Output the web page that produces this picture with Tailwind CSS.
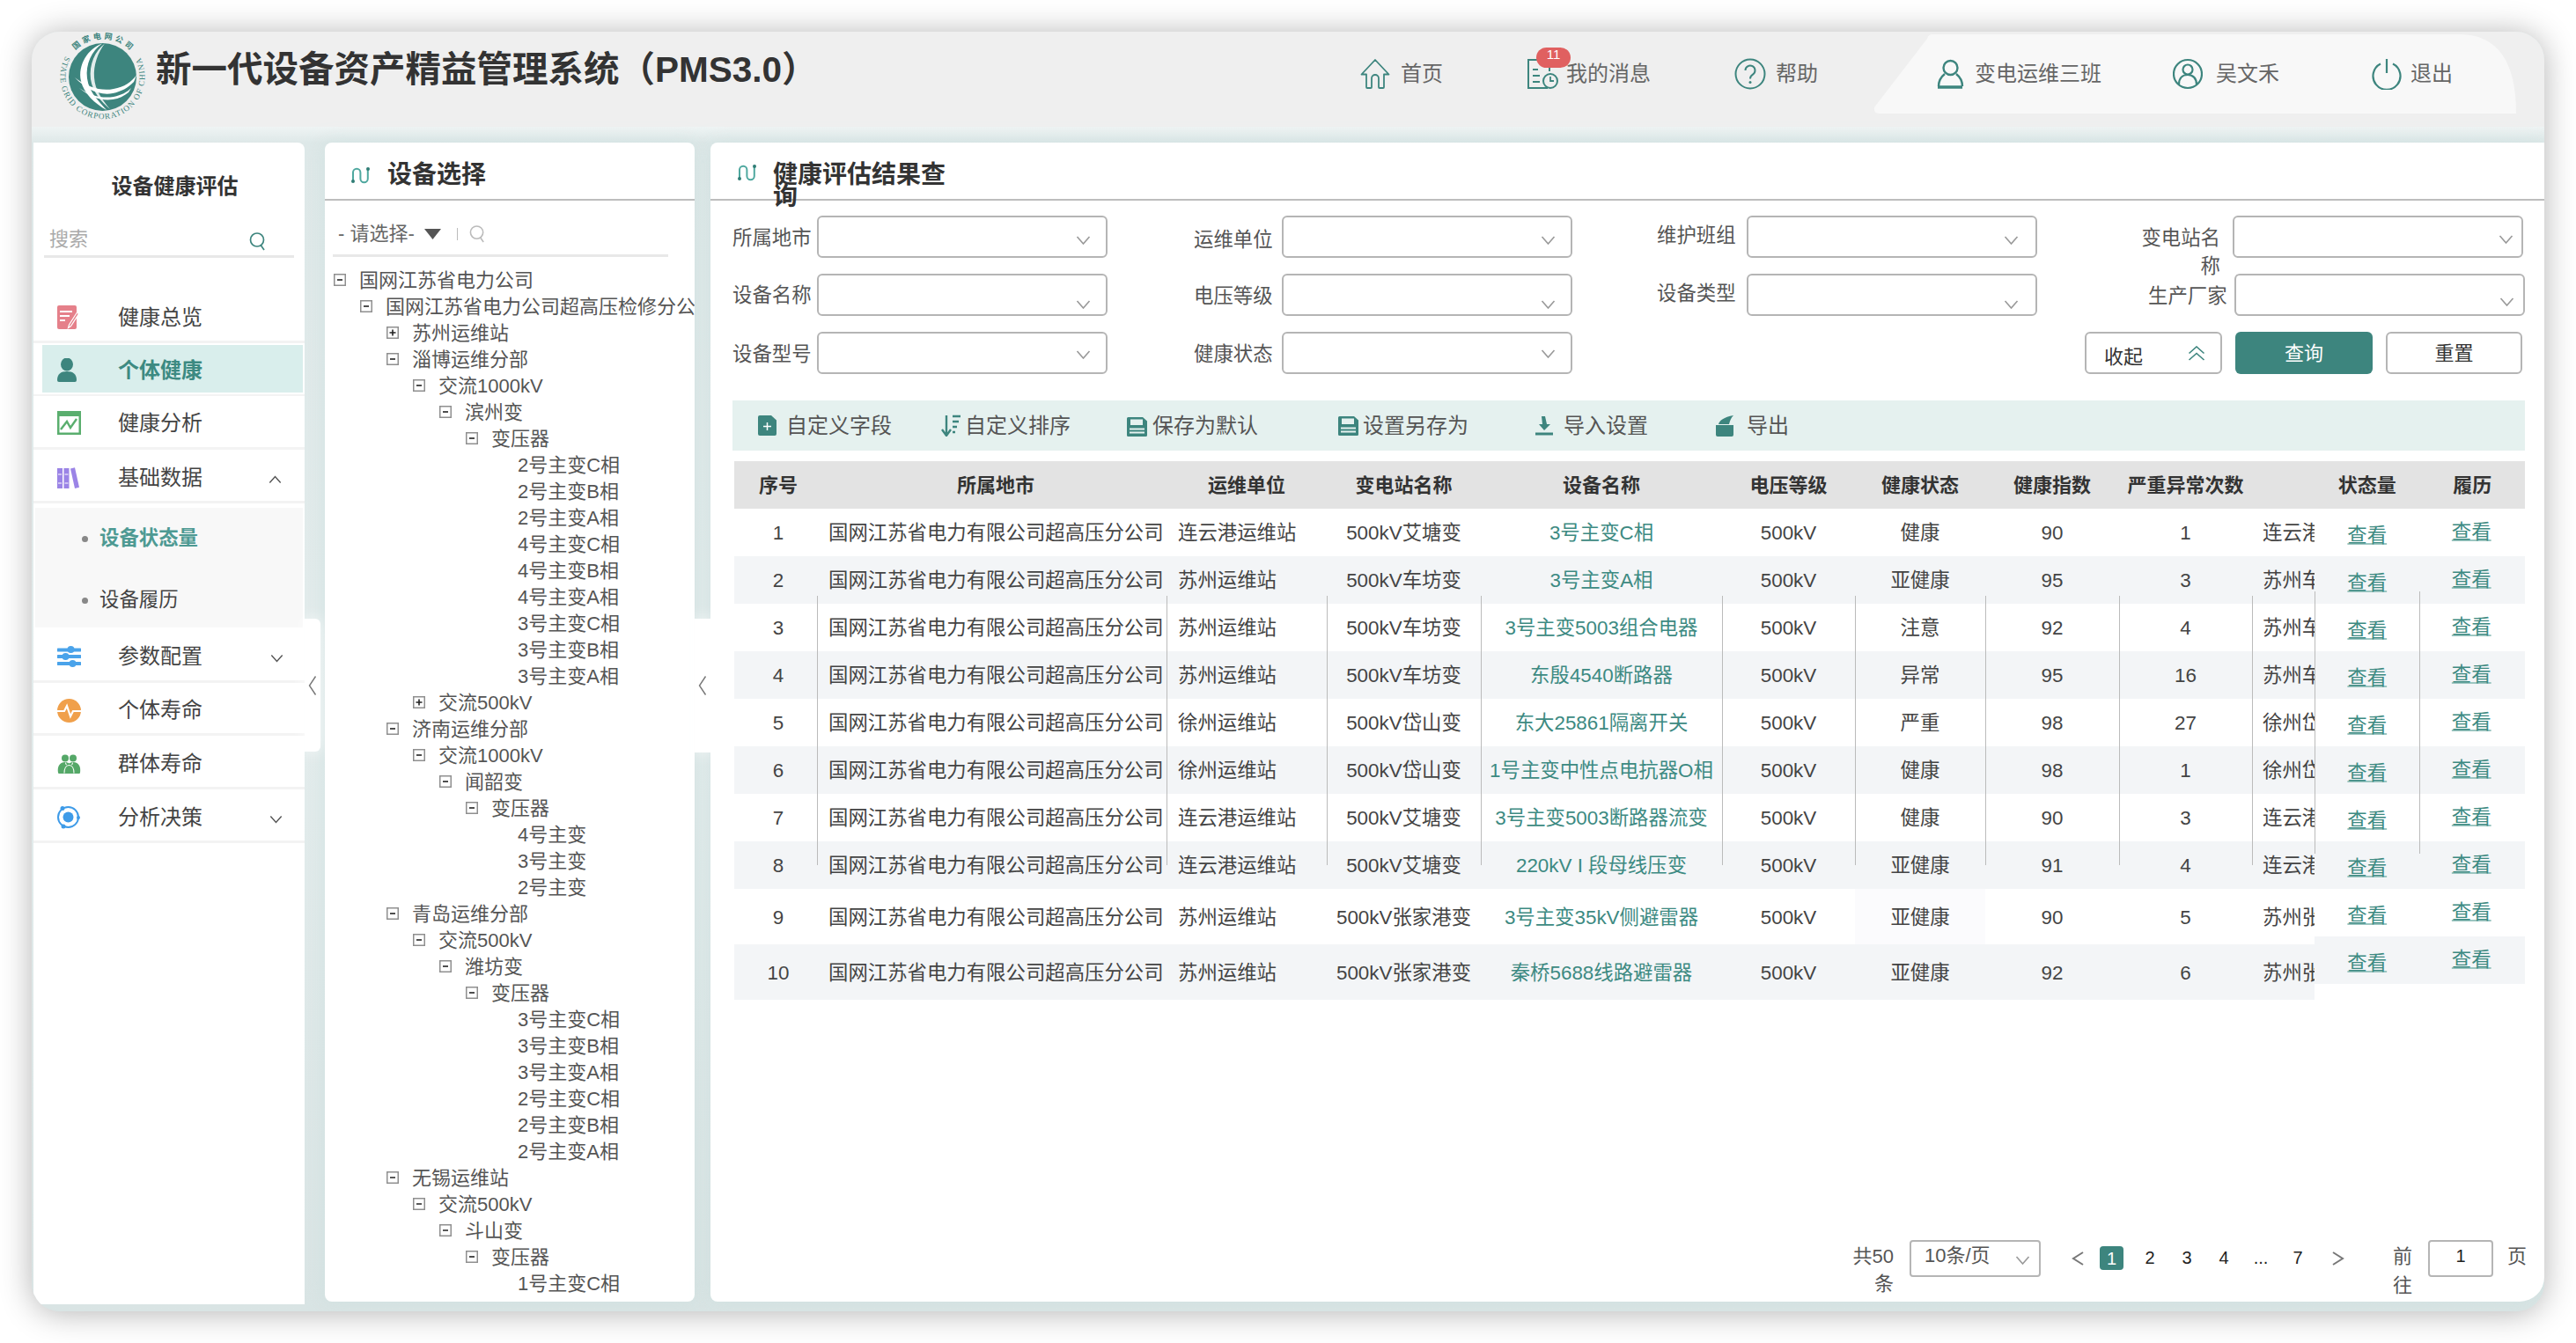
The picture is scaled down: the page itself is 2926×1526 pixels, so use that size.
<!DOCTYPE html>
<html lang="zh-CN">
<head>
<meta charset="utf-8">
<title>PMS3.0</title>
<script src="https://cdn.jsdelivr.net/npm/@tailwindcss/browser@4"></script>
</head>
<body class="w-[2926px] h-[1526px] overflow-hidden bg-white p-[36px] [font-family:'Liberation_Sans','Noto_Sans_CJK_SC',sans-serif] text-[#555]">
<svg class="absolute w-0 h-0" aria-hidden="true">
  <symbol id="chev" viewBox="0 0 17 10"><path d="M1.5 1 8.5 9 15.5 1" fill="none" stroke="#999" stroke-width="1.6"/></symbol>
  <symbol id="minus" viewBox="0 0 14 14"><rect x=".75" y=".75" width="12.5" height="12.5" fill="#fff" stroke="#8f8f8f" stroke-width="1.5"/><path d="M4 7h6" stroke="#222" stroke-width="1.6"/></symbol>
  <symbol id="plus" viewBox="0 0 14 14"><rect x=".75" y=".75" width="12.5" height="12.5" fill="#fff" stroke="#8f8f8f" stroke-width="1.5"/><path d="M3.5 7h7M7 3.5v7" stroke="#222" stroke-width="1.6"/></symbol>
  <symbol id="wave" viewBox="0 0 24 20"><path d="M3 16V7a4.2 4.2 0 0 1 8.400 0v7a4.200 4.200 0 0 0 8.400 0V4" fill="none" stroke="#4fa89f" stroke-width="2"/><circle cx="3" cy="17" r="2" fill="#2f7d75"/><circle cx="20" cy="3" r="2" fill="#2f7d75"/></symbol>
  <symbol id="search" viewBox="0 0 20 22"><circle cx="9" cy="9.500" r="7.500" fill="none" stroke="currentColor" stroke-width="1.700"/><path d="m13.500 16 3.500 5" stroke="currentColor" stroke-width="1.700"/></symbol>
  <symbol id="floppy" viewBox="0 0 25 24"><path d="M1 2.500A1.500 1.500 0 0 1 2.500 1H19l5 4.500V21.500a1.500 1.500 0 0 1-1.500 1.500H2.500A1.500 1.500 0 0 1 1 21.500Z" fill="#3d857e"/><rect x="5" y="3.500" width="14" height="6.500" fill="#e5f1ef"/><path d="M4 14.500h17M4 18.500h17" stroke="#e5f1ef" stroke-width="2"/></symbol>
</svg>

<div class="w-[2854px] h-[1454px] rounded-[32px] overflow-hidden flex flex-col bg-[#dbe6e6] shadow-[0_2px_36px_rgba(0,0,0,0.3)]">

  <!-- 顶栏 -->
  <header class="h-[108px] shrink-0 bg-[#efefef] flex items-start">
    <svg class="w-[112px] h-[108px] ml-[24px] shrink-0" viewBox="60 36 112 108">
      <defs>
        <path id="ringTop" d="M85.500 57A44 44 0 0 1 147.500 57"/>
        <path id="ringBottom" d="M74.500 64A48 48 0 1 0 158.500 64"/>
      </defs>
      <circle cx="116.500" cy="87.500" r="38.500" fill="#3d857e"/>
      <path d="M116 49.500C100 55 88 74 92 92c3 14 16 26 29 33-8-9-20-20-22-36C97 73 104 58 116 49.500Z" fill="#fff"/>
      <path d="M119 49.500C108 58 101 73 103 90c2 14 12 26 22 34-9-11-17-21-18-36-1-14 4-28 12-38.500Z" fill="#fff" opacity=".85"/>
      <path d="M85 88c14 11 30 16 44 13 12-2 21-8 26-16-1 3-2 6-3 8-7 7-14 11-24 13-15 3-31-5-43-18Z" fill="#fff"/>
      <path d="M90 100c13 9 26 12 39 10 9-2 15-5 20-10l-3 5c-5 4-11 7-18 8-13 2-26-3-38-13Z" fill="#fff"/>
      <text font-size="9" fill="#3d857e" font-weight="700" font-family="'Noto Sans CJK SC',sans-serif"><textPath href="#ringTop" textLength="69" lengthAdjust="spacing">国家电网公司</textPath></text>
      <text font-size="9.200" fill="#3d857e" font-family="'Liberation Serif',serif"><textPath href="#ringBottom" textLength="197" lengthAdjust="spacing">STATE GRID CORPORATION OF CHINA</textPath></text>
    </svg>
    <h1 class="ml-[5px] mt-[20px] text-[40.5px] leading-[46px] font-bold text-[#333] whitespace-nowrap">新一代设备资产精益管理系统（PMS3.0）</h1>

    <nav class="ml-auto mr-[32px] mt-[3px] h-[90px] w-[1314px] flex items-center shrink-0 text-[24px] text-[#666]">
      <div class="w-[190px] flex items-center gap-[11px]">
        <svg class="w-[36px] h-[36px]" viewBox="0 0 36 36"><path d="M18 2 2.500 18.500H8V33a1 1 0 0 0 1 1h4a1 1 0 0 0 1-1V23a4 4 0 0 1 8 0v10a1 1 0 0 0 1 1h4a1 1 0 0 0 1-1V18.500h5.500Z" fill="none" stroke="#3d857e" stroke-width="1.800" stroke-linejoin="round"/></svg>
        <span>首页</span>
      </div>
      <div class="w-[236px] flex items-center gap-[9px]">
        <div class="relative w-[36px] h-[36px]">
          <svg class="w-[36px] h-[36px]" viewBox="0 0 36 36"><path d="M24 34H2V2h24v13" fill="none" stroke="#3d857e" stroke-width="2"/><path d="M7 13h6M7 20h8M7 27h8" stroke="#3d857e" stroke-width="2"/><circle cx="27" cy="26" r="8" fill="#efefef" stroke="#3d857e" stroke-width="2"/><path d="M27 21v5h4" fill="none" stroke="#3d857e" stroke-width="1.800"/></svg>
          <span class="absolute left-[11px] top-[-12px] w-[39px] h-[23px] rounded-[20px] bg-[#e06060] text-white text-[15px] leading-[15px] text-center">11</span>
        </div>
        <span>我的消息</span>
      </div>
      <div class="w-[158px] flex items-center gap-[11px]">
        <svg class="w-[36px] h-[36px]" viewBox="0 0 36 36"><circle cx="18" cy="18" r="16.500" fill="none" stroke="#3d857e" stroke-width="2"/><path d="M12.500 14a5.500 5.500 0 1 1 8.500 4.600c-2 1.300-3 2.400-3 4.900" fill="none" stroke="#3d857e" stroke-width="2"/><circle cx="18" cy="27.500" r="1.500" fill="#3d857e"/></svg>
        <span>帮助</span>
      </div>
      <div class="relative w-[730px] h-[90px] flex items-center pl-[72px]">
        <svg class="absolute inset-0 w-[730px] h-[90px]" viewBox="0 0 730 90"><path d="M61 5Q62 0 68 0H665Q730 0 730 90H6Q0 90 1 83Z" fill="#f8f8f8"/></svg>
        <div class="relative w-[268px] flex items-center gap-[12px]">
          <svg class="w-[31px] h-[34px]" viewBox="0 0 31 34"><circle cx="15.500" cy="10" r="8" fill="none" stroke="#3d857e" stroke-width="2.400"/><path d="M9 17C4 21 2 25 2 31M22 17c5 4 7 8 7 14" fill="none" stroke="#3d857e" stroke-width="2.400"/><path d="M1 32h28" stroke="#3d857e" stroke-width="3.400"/></svg>
          <span>变电运维三班</span>
        </div>
        <div class="relative w-[226px] flex items-center gap-[15px]">
          <svg class="w-[34px] h-[36px]" viewBox="0 0 34 36"><circle cx="17" cy="18" r="16" fill="none" stroke="#3d857e" stroke-width="2.200"/><circle cx="17" cy="13" r="5.500" fill="none" stroke="#3d857e" stroke-width="2.200"/><path d="M7 30c0-7 4-11 10-11s10 4 10 11" fill="none" stroke="#3d857e" stroke-width="2.200"/></svg>
          <span>吴文禾</span>
        </div>
        <div class="relative flex items-center gap-[10px]">
          <svg class="w-[34px] h-[36px]" viewBox="0 0 34 36"><path d="M10 6.500a15.500 15.500 0 1 0 14 0" fill="none" stroke="#3d857e" stroke-width="2.200"/><path d="M17 1v16" stroke="#3d857e" stroke-width="2.200"/></svg>
          <span>退出</span>
        </div>
      </div>
    </nav>
  </header>

  <!-- 主体 -->
  <div class="relative flex-1 flex items-start pt-[18px] bg-[linear-gradient(#eff4f4,#dee8e8_18px,#e3ecec_700px,#d9e4e4)]">
    <!-- 折叠把手 -->
    <div class="absolute left-[310px] top-[559px] w-[18px] h-[151px] bg-white rounded-r-[6px] flex items-center justify-center shadow-[0_0_18px_rgba(255,255,255,0.8)]">
      <svg class="w-[10px] h-[24px]" viewBox="0 0 10 24"><path d="M8.500 1.500 1.500 12l7 10.500" fill="none" stroke="#777" stroke-width="1.400"/></svg>
    </div>
    <div class="absolute left-[753px] top-[559px] w-[18px] h-[152px] bg-white flex items-center justify-center shadow-[0_0_18px_rgba(255,255,255,0.8)]">
      <svg class="w-[10px] h-[24px]" viewBox="0 0 10 24"><path d="M8.500 1.500 1.500 12l7 10.500" fill="none" stroke="#777" stroke-width="1.400"/></svg>
    </div>

    <!-- 左侧菜单 -->
    <aside class="ml-[2px] w-[308px] h-[1320px] bg-white rounded-tr-[8px] shrink-0 text-[24px] text-[#444]">
      <div class="h-[100px] pl-[13px] flex items-center justify-center font-bold text-[#333]">设备健康评估</div>
      <div class="mx-[12px] h-[31px] flex justify-between border-b-[3px] border-[#e8e8e8]">
        <span class="pl-[6px] text-[22px] leading-[20px] text-[#aaa]">搜索</span>
        <svg class="w-[20px] h-[22px] mr-[31px] mt-[1px] text-[#3d857e]"><use href="#search"/></svg>
      </div>
      <div class="mt-[37px]">
        <div class="h-[60px] pt-[4px] flex items-center pl-[27px] border-b-[3px] border-[#f3f3f3]">
          <svg class="w-[24px] h-[27px] mr-[45px]" viewBox="0 0 24 27"><path d="M0 2a2 2 0 0 1 2-2h18a2 2 0 0 1 2 2v23a2 2 0 0 1-2 2H2a2 2 0 0 1-2-2Z" fill="#e5808a"/><path d="M3 7h14M3 12h11M3 17h6" stroke="#fff" stroke-width="1.800"/><path d="m22.500 8-9 14-1 3.500 3-2 9-14Z" fill="#e5808a" stroke="#fff" stroke-width="1.200"/></svg>
          <span>健康总览</span>
        </div>
        <div class="h-[60px] pt-[2px] pb-[2px] border-b-[2px] border-[#f3f3f3] pl-[10px] pr-[2px]">
          <div class="h-full pt-[3px] bg-[#d9eeec] flex items-center pl-[17px] text-[#3d8a82] font-bold">
            <svg class="w-[22px] h-[27px] mr-[47px]" viewBox="0 0 22 27"><ellipse cx="11" cy="7" rx="7" ry="7.500" fill="#3d857e"/><path d="M0 25c0-7 4-10 11-10s11 3 11 10a2 2 0 0 1-2 2H2a2 2 0 0 1-2-2Z" fill="#3d857e"/></svg>
            <span>个体健康</span>
          </div>
        </div>
        <div class="h-[61px] pt-[3px] flex items-center pl-[27px] border-b-[3px] border-[#f3f3f3]">
          <svg class="w-[27px] h-[27px] mr-[42px]" viewBox="0 0 27 27"><rect width="27" height="27" fill="#5aae6e"/><rect x="2.500" y="6" width="22" height="18.500" fill="#fff"/><path d="m4 21 7-9 4 7 7-10" fill="none" stroke="#5aae6e" stroke-width="2.400"/></svg>
          <span>健康分析</span>
        </div>
        <div class="h-[61px] pt-[6px] flex items-center pl-[27px] border-b-[3px] border-[#f3f3f3]">
          <svg class="w-[25px] h-[24px] mr-[44px]" viewBox="0 0 25 24"><path d="M0 1h6v23H0ZM7.500 1h6v23h-6Z" fill="#9b84e6"/><path d="m15 1.500 5-1.200 5 22.500-5 1.200Z" fill="#9b84e6"/><path d="M1 8h4M8.500 8h4M1 18h4M8.500 18h4" stroke="#fff" stroke-width="1.200"/></svg>
          <span>基础数据</span>
          <svg class="w-[15px] h-[10px] ml-auto mr-[26px] mt-[4px] rotate-180 text-[#444]" viewBox="0 0 17 10"><path d="M1.500 1 8.500 9 15.500 1" fill="none" stroke="#555" stroke-width="1.600"/></svg>
        </div>
        <div class="mt-[5px] ml-[2px] w-[304px] bg-[#f8f8f8] text-[22.400px]">
          <div class="h-[68px] pt-[2px] flex items-center pl-[53px] gap-[13px] text-[#4e9a93] font-bold"><i class="w-[7px] h-[7px] rounded-full bg-[#888]"></i><span>设备状态量</span></div>
          <div class="h-[68px] pt-[6px] flex items-center pl-[53px] gap-[13px]"><i class="w-[7px] h-[7px] rounded-full bg-[#888]"></i><span>设备履历</span></div>
        </div>
        <div class="h-[63px] pt-[5px] flex items-center pl-[27px] border-b-[3px] border-[#f3f3f3]">
          <svg class="w-[27px] h-[26px] mr-[42px]" viewBox="0 0 27 26"><path d="M1 5.500h11M19 5.500h7M1 13h5M13 13h13M1 21h13M21 21h5" stroke="#4aa3ea" stroke-width="4" stroke-linecap="round"/><circle cx="15.500" cy="5" r="4" fill="#4aa3ea"/><circle cx="9.500" cy="13" r="4" fill="#4aa3ea"/><circle cx="17.500" cy="21" r="4" fill="#4aa3ea"/></svg>
          <span>参数配置</span>
          <svg class="w-[15px] h-[10px] ml-auto mr-[24px] mt-[4px]" viewBox="0 0 17 10"><path d="M1.500 1 8.500 9 15.500 1" fill="none" stroke="#555" stroke-width="1.600"/></svg>
        </div>
        <div class="h-[60px] pt-[5px] flex items-center pl-[27px] border-b-[3px] border-[#f3f3f3]">
          <svg class="w-[27px] h-[27px] mr-[42px]" viewBox="0 0 27 27"><circle cx="13.500" cy="13.500" r="13.500" fill="#f0a04b"/><path d="M0 14h8l3-6 4 12 3-6h9" fill="none" stroke="#fff" stroke-width="2.200"/></svg>
          <span>个体寿命</span>
        </div>
        <div class="h-[61px] pt-[5px] flex items-center pl-[27px] border-b-[3px] border-[#f3f3f3]">
          <svg class="w-[27px] h-[22px] mr-[42px]" viewBox="0 0 27 22"><circle cx="9" cy="4.500" r="4" fill="#55a868"/><circle cx="18" cy="4.500" r="4" fill="#55a868"/><path d="M1 21c-1-6 1-12 8-12 2 0 3 .5 4.500 1.500C15 9.500 16 9 18 9c7 0 9 6 8 12-.2 1-1 1-2 1H3c-1 0-1.800 0-2-1Z" fill="#55a868"/><path d="M8 21.500c0-5 2-9 5.500-9s5.500 4 5.500 9M9.500 9.500c0 1 .5 2 1 2.500M17.500 9.500c0 1-.5 2-1 2.500" fill="none" stroke="#fff" stroke-width="1.100"/></svg>
          <span>群体寿命</span>
        </div>
        <div class="h-[61px] pt-[5px] flex items-center pl-[26px] border-b-[3px] border-[#f3f3f3]">
          <svg class="w-[27px] h-[27px] mr-[43px]" viewBox="0 0 27 27"><circle cx="13.500" cy="13.500" r="11.500" fill="none" stroke="#3e9be8" stroke-width="2"/><circle cx="13.500" cy="13.500" r="6" fill="#3e9be8"/><circle cx="7" cy="3.500" r="2.500" fill="#3e9be8"/><circle cx="25" cy="14" r="2" fill="#3e9be8"/><circle cx="8" cy="24" r="2.500" fill="#3e9be8"/></svg>
          <span>分析决策</span>
          <svg class="w-[15px] h-[10px] ml-auto mr-[25px] mt-[4px]" viewBox="0 0 17 10"><path d="M1.500 1 8.500 9 15.500 1" fill="none" stroke="#555" stroke-width="1.600"/></svg>
        </div>
      </div>
    </aside>

    <!-- 设备选择 -->
    <section class="ml-[23px] w-[420px] h-[1317px] bg-white rounded-t-[8px] rounded-b-[8px] overflow-hidden shrink-0 shadow-[0_0_20px_rgba(200,222,220,0.6)]">
      <div class="h-[66px] pt-[10px] flex items-center border-b-[2px] border-[#bdbdbd]">
        <svg class="w-[24px] h-[20px] ml-[29px] mr-[18px]"><use href="#wave"/></svg>
        <h2 class="text-[28px] font-bold text-[#333]">设备选择</h2>
      </div>
      <div class="ml-[9px] w-[381px] h-[64px] pt-[14px] flex items-center border-b-[3px] border-[#e8e8e8] text-[22px] text-[#666]">
        <span class="pl-[6px] whitespace-nowrap">- 请选择-</span>
        <svg class="w-[19px] h-[12px] ml-[11px] mr-[18px]" viewBox="0 0 19 12"><path d="M0 0h19L9.500 12Z" fill="#555"/></svg>
        <i class="w-px h-[14px] bg-[#bbb] mr-[13px]"></i>
        <svg class="w-[19px] h-[21px] text-[#bbb]"><use href="#search"/></svg>
      </div>
      <div class="mt-[11px] pl-[10px] text-[22px] text-[#555] whitespace-nowrap [&>div]:h-[30px] [&>div]:flex [&>div]:items-center [&_svg]:w-[14px] [&_svg]:h-[14px] [&_svg]:mr-[15px] [&_svg]:shrink-0">
        <div><svg><use href="#minus"/></svg>国网江苏省电力公司</div>
        <div class="pl-[30px]"><svg><use href="#minus"/></svg>国网江苏省电力公司超高压检修分公司</div>
        <div class="pl-[60px]"><svg><use href="#plus"/></svg>苏州运维站</div>
        <div class="pl-[60px]"><svg><use href="#minus"/></svg>淄博运维分部</div>
        <div class="pl-[90px]"><svg><use href="#minus"/></svg>交流1000kV</div>
        <div class="pl-[120px]"><svg><use href="#minus"/></svg>滨州变</div>
        <div class="pl-[150px]"><svg><use href="#minus"/></svg>变压器</div>
        <div class="pl-[209px]">2号主变C相</div>
        <div class="pl-[209px]">2号主变B相</div>
        <div class="pl-[209px]">2号主变A相</div>
        <div class="pl-[209px]">4号主变C相</div>
        <div class="pl-[209px]">4号主变B相</div>
        <div class="pl-[209px]">4号主变A相</div>
        <div class="pl-[209px]">3号主变C相</div>
        <div class="pl-[209px]">3号主变B相</div>
        <div class="pl-[209px]">3号主变A相</div>
        <div class="pl-[90px]"><svg><use href="#plus"/></svg>交流500kV</div>
        <div class="pl-[60px]"><svg><use href="#minus"/></svg>济南运维分部</div>
        <div class="pl-[90px]"><svg><use href="#minus"/></svg>交流1000kV</div>
        <div class="pl-[120px]"><svg><use href="#minus"/></svg>闻韶变</div>
        <div class="pl-[150px]"><svg><use href="#minus"/></svg>变压器</div>
        <div class="pl-[209px]">4号主变</div>
        <div class="pl-[209px]">3号主变</div>
        <div class="pl-[209px]">2号主变</div>
        <div class="pl-[60px]"><svg><use href="#minus"/></svg>青岛运维分部</div>
        <div class="pl-[90px]"><svg><use href="#minus"/></svg>交流500kV</div>
        <div class="pl-[120px]"><svg><use href="#minus"/></svg>潍坊变</div>
        <div class="pl-[150px]"><svg><use href="#minus"/></svg>变压器</div>
        <div class="pl-[209px]">3号主变C相</div>
        <div class="pl-[209px]">3号主变B相</div>
        <div class="pl-[209px]">3号主变A相</div>
        <div class="pl-[209px]">2号主变C相</div>
        <div class="pl-[209px]">2号主变B相</div>
        <div class="pl-[209px]">2号主变A相</div>
        <div class="pl-[60px]"><svg><use href="#minus"/></svg>无锡运维站</div>
        <div class="pl-[90px]"><svg><use href="#minus"/></svg>交流500kV</div>
        <div class="pl-[120px]"><svg><use href="#minus"/></svg>斗山变</div>
        <div class="pl-[150px]"><svg><use href="#minus"/></svg>变压器</div>
        <div class="pl-[209px]">1号主变C相</div>
      </div>
    </section>

    <!-- 健康评估结果查询 -->
    <section class="ml-[18px] w-[2083px] h-[1317px] bg-white rounded-tl-[8px] rounded-bl-[8px] rounded-br-[28px] shrink-0 flex flex-col text-[22.400px] shadow-[0_0_20px_rgba(200,222,220,0.6)]">
      <div class="h-[66px] shrink-0 flex items-start border-b-[2px] border-[#bdbdbd]">
        <svg class="w-[24px] h-[20px] ml-[30px] mr-[17px] mt-[24px]"><use href="#wave"/></svg>
        <h2 class="w-[200px] mt-[24px] text-[28px] leading-[25px] font-bold text-[#333]">健康评估结果查询</h2>
      </div>

      <div class="mt-[17px] pl-[25px] grid grid-cols-[524px_526px_550px_436px] auto-rows-[48px] gap-y-[18px] text-[#555]">
        <!-- 第一行 -->
        <div class="flex gap-[6px]"><span class="mt-[10px] leading-[32px]">所属地市</span><div class="w-[330px] h-[48px] border-2 border-[#b5b5b5] rounded-[6px] flex justify-end pr-[17px] pt-[21px]"><svg class="w-[17px] h-[10px]"><use href="#chev"/></svg></div></div>
        <div class="flex gap-[10px]"><span class="mt-[12px] leading-[32px]">运维单位</span><div class="w-[330px] h-[48px] border-2 border-[#b5b5b5] rounded-[6px] flex justify-end pr-[17px] pt-[21px]"><svg class="w-[17px] h-[10px]"><use href="#chev"/></svg></div></div>
        <div class="flex gap-[12px]"><span class="mt-[7px] leading-[32px]">维护班组</span><div class="w-[330px] h-[48px] border-2 border-[#b5b5b5] rounded-[6px] flex justify-end pr-[19px] pt-[21px]"><svg class="w-[17px] h-[10px]"><use href="#chev"/></svg></div></div>
        <div class="flex gap-[14px]"><span class="w-[90px] mt-[10px] leading-[32px] text-right">变电站名称</span><div class="w-[330px] h-[48px] border-2 border-[#b5b5b5] rounded-[6px] flex justify-end pr-[9px] pt-[20px]"><svg class="w-[17px] h-[10px]"><use href="#chev"/></svg></div></div>
        <!-- 第二行 -->
        <div class="flex gap-[6px]"><span class="mt-[9px] leading-[32px]">设备名称</span><div class="w-[330px] h-[48px] border-2 border-[#b5b5b5] rounded-[6px] flex justify-end pr-[17px] pt-[28px]"><svg class="w-[17px] h-[10px]"><use href="#chev"/></svg></div></div>
        <div class="flex gap-[10px]"><span class="mt-[10px] leading-[32px]">电压等级</span><div class="w-[330px] h-[48px] border-2 border-[#b5b5b5] rounded-[6px] flex justify-end pr-[17px] pt-[28px]"><svg class="w-[17px] h-[10px]"><use href="#chev"/></svg></div></div>
        <div class="flex gap-[12px]"><span class="mt-[7px] leading-[32px]">设备类型</span><div class="w-[330px] h-[48px] border-2 border-[#b5b5b5] rounded-[6px] flex justify-end pr-[19px] pt-[28px]"><svg class="w-[17px] h-[10px]"><use href="#chev"/></svg></div></div>
        <div class="flex gap-[8px] pl-[8px]"><span class="mt-[10px] leading-[32px]">生产厂家</span><div class="w-[330px] h-[48px] border-2 border-[#b5b5b5] rounded-[6px] flex justify-end pr-[10px] pt-[25px]"><svg class="w-[17px] h-[10px]"><use href="#chev"/></svg></div></div>
        <!-- 第三行 -->
        <div class="flex gap-[6px]"><span class="mt-[10px] leading-[32px]">设备型号</span><div class="w-[330px] h-[48px] border-2 border-[#b5b5b5] rounded-[6px] flex justify-end pr-[17px] pt-[19px]"><svg class="w-[17px] h-[10px]"><use href="#chev"/></svg></div></div>
        <div class="flex gap-[10px]"><span class="mt-[10px] leading-[32px]">健康状态</span><div class="w-[330px] h-[48px] border-2 border-[#b5b5b5] rounded-[6px] flex justify-end pr-[17px] pt-[18px]"><svg class="w-[17px] h-[10px]"><use href="#chev"/></svg></div></div>
        <div class="col-span-2 flex justify-end pr-[3px] gap-[15px] text-[22px]">
          <div class="w-[156px] h-[48px] border-2 border-[#b5b5b5] rounded-[6px] flex items-start justify-between pl-[20px] pr-[17px] text-[#333]">
            <span class="mt-[11px] leading-[32px]">收起</span>
            <svg class="w-[20px] h-[17px] mt-[14px]" viewBox="0 0 20 17"><path d="M1.500 8.500 10 1l8.500 7.500M1.500 16 10 8.500l8.500 7.500" fill="none" stroke="#3d857e" stroke-width="1.600"/></svg>
          </div>
          <div class="w-[156px] h-[48px] rounded-[6px] bg-[#3d857e] text-white flex items-center justify-center">查询</div>
          <div class="w-[155px] h-[48px] border-2 border-[#b5b5b5] rounded-[6px] text-[#333] flex items-center justify-center">重置</div>
        </div>
      </div>

      <!-- 工具栏 -->
      <div class="mt-[30px] ml-[25px] w-[2036px] h-[57px] shrink-0 bg-[#e5f1ef] flex items-center pl-[29px] text-[24px] text-[#555]">
        <div class="w-[208px] flex items-center">
          <svg class="w-[21px] h-[23px] mr-[11px]" viewBox="0 0 21 23"><path d="M2 0h13l6 5.500V21a2 2 0 0 1-2 2H2a2 2 0 0 1-2-2V2a2 2 0 0 1 2-2Z" fill="#3d857e"/><path d="M6 12.500h9M10.500 8v9" stroke="#fff" stroke-width="1.500"/></svg>自定义字段
        </div>
        <div class="w-[210px] flex items-center">
          <svg class="w-[22px] h-[25px] mr-[5px]" viewBox="0 0 22 25"><path d="M6 1v21M1 17l5 7 5-7" fill="none" stroke="#3d857e" stroke-width="2.400"/><path d="M13 2h9M13 8h7M13 14h5M13 20h3" stroke="#3d857e" stroke-width="2.600"/></svg>自定义排序
        </div>
        <div class="w-[240px] flex items-center">
          <svg class="w-[25px] h-[24px] mr-[5px] mt-[2px]"><use href="#floppy"/></svg>保存为默认
        </div>
        <div class="w-[224px] flex items-center">
          <svg class="w-[25px] h-[24px] mr-[4px]"><use href="#floppy"/></svg>设置另存为
        </div>
        <div class="w-[205px] flex items-center">
          <svg class="w-[22px] h-[23px] mr-[11px]" viewBox="0 0 22 23"><path d="M8 1h4l2 9h4l-7 7-6-7h4Z" fill="#3d857e"/><path d="M1 21h20" stroke="#3d857e" stroke-width="3"/></svg>导入设置
        </div>
        <div class="flex items-center">
          <svg class="w-[22px] h-[24px] mr-[14px]" viewBox="0 0 22 24"><path d="M1 11h20v11a2 2 0 0 1-2 2H3a2 2 0 0 1-2-2Z" fill="#3d857e"/><path d="M4 10C5 6 10 2 21 0c-3 3-4 6-5 10Z" fill="#3d857e"/></svg>导出
        </div>
      </div>

      <!-- 表格 -->
      <div class="relative mt-[12px] ml-[27px] w-[2034px] h-[612px] shrink-0">
        <div class="w-[1795px] overflow-hidden">
          <table class="w-[1795px] table-fixed text-[#444] [&_td]:p-0 [&_td]:pt-[2px] [&_td]:text-center [&_td]:whitespace-nowrap [&_td]:overflow-hidden [&_td:nth-child(1)]:pl-[6px] [&_th:nth-child(1)]:pl-[6px] [&_th:nth-child(2)]:pl-[9px] [&_td:nth-child(2)]:text-left [&_td:nth-child(2)]:pl-[13px] [&_td:nth-child(3)]:text-left [&_td:nth-child(3)]:pl-[13px] [&_td:nth-child(5)]:text-[#3d8a82] [&_td:nth-child(10)]:text-left [&_td:nth-child(10)]:pl-[12px]">
            <colgroup>
              <col class="w-[94px]"><col class="w-[397px]"><col class="w-[182px]"><col class="w-[175px]"><col class="w-[274px]"><col class="w-[151px]"><col class="w-[148px]"><col class="w-[152px]"><col class="w-[151px]"><col class="w-[71px]">
            </colgroup>
            <thead>
              <tr class="h-[54px] bg-[#e3e3e3] text-[#333] text-[22px] [&_th]:font-bold [&_th]:whitespace-nowrap">
                <th>序号</th><th>所属地市</th><th>运维单位</th><th>变电站名称</th><th>设备名称</th><th>电压等级</th><th>健康状态</th><th>健康指数</th><th>严重异常次数</th><th></th>
              </tr>
            </thead>
            <tbody>
              <tr class="h-[54px]"><td>1</td><td>国网江苏省电力有限公司超高压分公司</td><td>连云港运维站</td><td>500kV艾塘变</td><td>3号主变C相</td><td>500kV</td><td>健康</td><td>90</td><td>1</td><td>连云港艾塘变</td></tr>
              <tr class="h-[54px] bg-[#f3f5f7]"><td>2</td><td>国网江苏省电力有限公司超高压分公司</td><td>苏州运维站</td><td>500kV车坊变</td><td>3号主变A相</td><td>500kV</td><td>亚健康</td><td>95</td><td>3</td><td>苏州车坊变</td></tr>
              <tr class="h-[54px]"><td>3</td><td>国网江苏省电力有限公司超高压分公司</td><td>苏州运维站</td><td>500kV车坊变</td><td>3号主变5003组合电器</td><td>500kV</td><td>注意</td><td>92</td><td>4</td><td>苏州车坊变</td></tr>
              <tr class="h-[54px] bg-[#f3f5f7]"><td>4</td><td>国网江苏省电力有限公司超高压分公司</td><td>苏州运维站</td><td>500kV车坊变</td><td>东殷4540断路器</td><td>500kV</td><td>异常</td><td>95</td><td>16</td><td>苏州车坊变</td></tr>
              <tr class="h-[54px]"><td>5</td><td>国网江苏省电力有限公司超高压分公司</td><td>徐州运维站</td><td>500kV岱山变</td><td>东大25861隔离开关</td><td>500kV</td><td>严重</td><td>98</td><td>27</td><td>徐州岱山变</td></tr>
              <tr class="h-[54px] bg-[#f3f5f7]"><td>6</td><td>国网江苏省电力有限公司超高压分公司</td><td>徐州运维站</td><td>500kV岱山变</td><td>1号主变中性点电抗器O相</td><td>500kV</td><td>健康</td><td>98</td><td>1</td><td>徐州岱山变</td></tr>
              <tr class="h-[54px]"><td>7</td><td>国网江苏省电力有限公司超高压分公司</td><td>连云港运维站</td><td>500kV艾塘变</td><td>3号主变5003断路器流变</td><td>500kV</td><td>健康</td><td>90</td><td>3</td><td>连云港艾塘变</td></tr>
              <tr class="h-[54px] bg-[#f3f5f7]"><td>8</td><td>国网江苏省电力有限公司超高压分公司</td><td>连云港运维站</td><td>500kV艾塘变</td><td>220kV I 段母线压变</td><td>500kV</td><td>亚健康</td><td>91</td><td>4</td><td>连云港艾塘变</td></tr>
              <tr class="h-[63px]"><td>9</td><td>国网江苏省电力有限公司超高压分公司</td><td>苏州运维站</td><td>500kV张家港变</td><td>3号主变35kV侧避雷器</td><td>500kV</td><td class="bg-[#fbfbfd]">亚健康</td><td>90</td><td>5</td><td>苏州张家港变</td></tr>
              <tr class="h-[63px] bg-[#f3f5f7]"><td>10</td><td>国网江苏省电力有限公司超高压分公司</td><td>苏州运维站</td><td>500kV张家港变</td><td>秦桥5688线路避雷器</td><td>500kV</td><td>亚健康</td><td>92</td><td>6</td><td>苏州张家港变</td></tr>
            </tbody>
          </table>
        </div>

        <!-- 固定列 -->
        <table class="absolute left-[1795px] top-0 w-[239px] table-fixed bg-white text-[#3d8a82] [&_td]:p-0 [&_td]:text-center [&_td:first-child]:pt-[8px] [&_td:last-child]:pb-[1px] [&_td:last-child]:pr-[2px] [&_u]:underline-offset-1 [&_u]:decoration-[#9cc6c1]">
          <thead><tr class="h-[54px] bg-[#e3e3e3] text-[#333] text-[22px] [&_th]:font-bold"><th>状态量</th><th>履历</th></tr></thead>
          <tbody>
            <tr class="h-[54px]"><td><u>查看</u></td><td><u>查看</u></td></tr>
            <tr class="h-[54px] bg-[#f3f5f7]"><td><u>查看</u></td><td><u>查看</u></td></tr>
            <tr class="h-[54px]"><td><u>查看</u></td><td><u>查看</u></td></tr>
            <tr class="h-[54px] bg-[#f3f5f7]"><td><u>查看</u></td><td><u>查看</u></td></tr>
            <tr class="h-[54px]"><td><u>查看</u></td><td><u>查看</u></td></tr>
            <tr class="h-[54px] bg-[#f3f5f7]"><td><u>查看</u></td><td><u>查看</u></td></tr>
            <tr class="h-[54px]"><td><u>查看</u></td><td><u>查看</u></td></tr>
            <tr class="h-[54px] bg-[#f3f5f7]"><td><u>查看</u></td><td><u>查看</u></td></tr>
            <tr class="h-[54px]"><td><u>查看</u></td><td><u>查看</u></td></tr>
            <tr class="h-[54px] bg-[#f3f5f7]"><td><u>查看</u></td><td><u>查看</u></td></tr>
          </tbody>
        </table>

        <!-- 拖拽残留的列分隔线 -->
        <i class="absolute top-[153px] h-[306px] w-px bg-[#bbb] left-[94px]"></i>
        <i class="absolute top-[153px] h-[306px] w-px bg-[#bbb] left-[491px]"></i>
        <i class="absolute top-[153px] h-[306px] w-px bg-[#bbb] left-[673px]"></i>
        <i class="absolute top-[153px] h-[306px] w-px bg-[#bbb] left-[848px]"></i>
        <i class="absolute top-[153px] h-[306px] w-px bg-[#bbb] left-[1122px]"></i>
        <i class="absolute top-[153px] h-[306px] w-px bg-[#bbb] left-[1273px]"></i>
        <i class="absolute top-[153px] h-[306px] w-px bg-[#bbb] left-[1421px]"></i>
        <i class="absolute top-[153px] h-[306px] w-px bg-[#bbb] left-[1573px]"></i>
        <i class="absolute top-[153px] h-[306px] w-px bg-[#bbb] left-[1724px]"></i>
        <i class="absolute top-[148px] h-[298px] w-px bg-[#bbb] left-[1795px]"></i>
        <i class="absolute top-[148px] h-[298px] w-px bg-[#bbb] left-[1914px]"></i>
      </div>

      <!-- 分页 -->
      <div class="mt-auto mb-[28px] h-[42px] flex justify-end items-start pr-[22px] text-[22px] text-[#555]">
        <div class="w-[47px] mt-[3px] leading-[31px] text-right">共50条</div>
        <div class="ml-[18px] w-[149px] h-[42px] border-2 border-[#b5b5b5] rounded-[4px] flex items-start justify-between pl-[15px] pr-[10px]">
          <span class="leading-[32px]">10条/页</span>
          <svg class="w-[17px] h-[10px] mt-[16px]"><use href="#chev"/></svg>
        </div>
        <div class="ml-[21px] w-[42px] h-[27px] mt-[7px] flex items-center justify-center">
          <svg class="w-[14px] h-[16px]" viewBox="0 0 14 16"><path d="M13 1 2 8l11 7" fill="none" stroke="#777" stroke-width="2"/></svg>
        </div>
        <div class="ml-[4px] w-[27px] h-[27px] mt-[7px] rounded-[4px] bg-[#3d857e] text-white text-[20px] flex items-center justify-center">1</div>
        <div class="ml-[9px] flex mt-[7px] h-[27px] leading-[27px] text-[20px] text-[#222] [&>span]:w-[42px] [&>span]:text-center">
          <span>2</span><span>3</span><span>4</span><span>...</span><span>7</span>
        </div>
        <div class="ml-[4px] w-[42px] h-[27px] mt-[7px] flex items-center justify-center">
          <svg class="w-[14px] h-[16px]" viewBox="0 0 14 16"><path d="m1 1 11 7-11 7" fill="none" stroke="#777" stroke-width="2"/></svg>
        </div>
        <div class="ml-[41px] w-[22px] leading-[33px] mt-[2px]">前往</div>
        <div class="ml-[18px] w-[74px] h-[42px] border-2 border-[#b5b5b5] rounded-[4px] text-center text-[20px] text-[#222] leading-[32px]">1</div>
        <div class="ml-[16px] w-[20px] leading-[33px] mt-[2px]">页</div>
      </div>
    </section>
  </div>
</div>
</body>
</html>
